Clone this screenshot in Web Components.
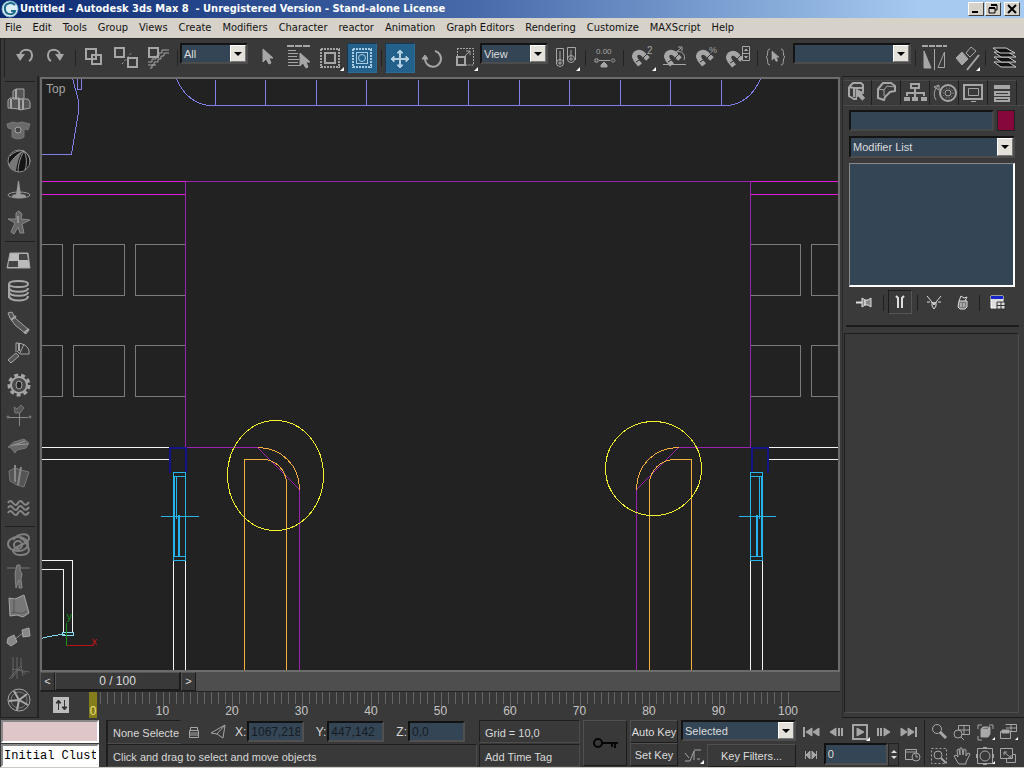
<!DOCTYPE html>
<html lang="en">
<head>
<meta charset="utf-8">
<title>Untitled - Autodesk 3ds Max 8</title>
<style>
html,body{margin:0;background:#393939}
body{font:11px/14px "Liberation Sans",Arial,sans-serif;color:#d8d8d8}
</style>
</head>
<body>
<mx-app></mx-app>
<script>
/* Icon artwork. The stroke is the element's colour; class "f" is filled, class "w" is white. */
const MAGNET='<path d="M14 23 10 18C6 12 12 8 17 12L22 17" stroke-width="5"/><path d="M10 20 15 17M17 16 21 12" stroke="#333"/>';
const CORNER='<path d="M30 25V29H26Z" fill="#fff" stroke="none"/>';
const DOTS='<path d="M7 7H26M7 25H26M7 7V26M25 7V26" stroke-width="2" stroke-dasharray="2 1"/>';
const ARROW='M0 0V13L3 10 6 15 8 14 6 9H10Z';
const ICONS={
undo:'<path d="M12 13C13 6 24 6 24 13 24 16 23 18 21 19" stroke-width="2"/><path class="f" stroke="none" d="M8 12H17L12 19Z"/>',
redo:'<path d="M20 13C19 6 8 6 8 13 8 16 9 18 11 19" stroke-width="2"/><path class="f" stroke="none" d="M15 12H24L20 19Z"/>',
link:'<g stroke-width="2"><rect x="8" y="7" width="10" height="10"/><rect x="14" y="13" width="9" height="9"/></g>',
unlink:'<g stroke-width="2"><rect x="5" y="6" width="9" height="9"/><rect x="18" y="16" width="9" height="9"/></g><path d="M12 22 22 10" stroke-dasharray="2 2"/>',
bind:'<rect x="7" y="6" width="9" height="9" stroke-width="2"/><path d="M6 20H10V17H14V14H17V11H20V8H27M6 23H12V20H16V17H19V14H22V11H27M8 26H10V23H14"/>',
pointer:`<path class="f" transform="translate(13 7)" d="${ARROW}"/>`,
byname:`<path d="M5 4H28" stroke-width="2" stroke-dasharray="7 1"/><path d="M6 8.500H14M6 11.500H16M6 14.500H15M6 17.500H17M6 20.500H16M6 23.500H19"/><path class="f" transform="translate(18 11)" d="${ARROW}"/>`,
rectsel:DOTS+'<rect x="11" y="11" width="10" height="10" stroke-width="2"/>'+CORNER,
windowsel:'<g stroke="#a9cde4">'+DOTS+'<rect x="10.500" y="10.500" width="11" height="11"/><circle cx="16" cy="16" r="3.500"/></g>',
move:'<g stroke="#b4cfdf"><path d="M16 9V25M8 17H24" stroke-width="2"/><path fill="#b4cfdf" d="M13 11 16 8 19 11ZM13 23 16 26 19 23ZM10 14 7 17 10 20ZM22 14 25 17 22 20Z"/></g>',
rotate:'<path d="M19 9A8 8 0 1 1 9 17" stroke-width="2"/><path class="f" d="M6 17 9 13 12 17Z"/>',
scale:'<path d="M9 6.500H25.500V23H18M9.500 6V14" stroke-dasharray="2 1"/><rect x="9" y="15" width="8" height="8" stroke-width="2"/><path d="M17 14 22 9M18 9H22V13"/>'+CORNER,
pivot:'<path d="M6.500 22V6.500H13.500V22M17.500 18V5.500H25.500V18"/><circle cx="10" cy="21" r="3.500"/><circle cx="21" cy="17" r="3.500"/><path d="M10 9V23M8 21H12M21 8V19M19 17H23"/>'+CORNER,
manip:'<path d="M7 17H10V20H7ZM11 18.500H22M23 18.500 25 16.500 27 18.500 25 20.500Z"/><path class="f" d="M16 20 19 23V25H13V23Z"/><text x="8" y="12" font-size="8">0.00</text>',
snap3:MAGNET+'<text x="21" y="12" font-size="10">2</text>'+CORNER,
snapA:MAGNET+'<path d="M5 22.500H28M16 12 23 6M20 5H24V9M18 10C24 8 28 13 26 18"/>',
snapP:MAGNET+'<text x="19" y="11" font-size="9">%</text>',
snapS:'<g transform="translate(-2 1)">'+MAGNET+'</g><path fill="#393939" d="M20.500 4.500H27.500V18.500H20.500Z"/><path d="M20 11.500H28M22.500 8.500 24 7 25.500 8.500ZM22.500 14.500 24 16 25.500 14.500Z"/>',
sets:`<path d="M10 7C6 7 9 14 6 15 9 16 6 23 10 23M21 7C25 7 22 14 25 15 22 16 25 23 21 23" /><path class="f" transform="translate(12 9) scale(.7)" d="${ARROW}"/>`,
mirror:'<path d="M4 4H29" stroke-width="2" stroke-dasharray="6 1"/><path class="f" d="M6 9V26H13Z"/><path d="M16.500 7V28M20 25.500 26.500 10V25.500Z"/>',
align:'<path d="M17 28 29 13" stroke-width="2"/><path class="f" d="M6 16 12 10 18 17 12 23Z"/><path d="M16 11 21 5 26 9 20 15Z"/>'+CORNER,
layers:'<g fill="#111" stroke="#ccc"><path d="M6 20H20L28 25H13Z"/><path d="M6 15H20L28 20H13Z"/><path d="M6 10H20L28 15H13Z"/><path d="M5 6H18L27 11H12Z"/></g>',
boxes:'<g fill="#555"><path d="M11 7 14 5H22V15H11ZM6 16 8 14H17V25L6 24ZM17 17 19 15H26L28 18V24L18 26Z"/></g><path d="M14 5V15M9 15V24M17 14V26M21 16V25" stroke-width="2"/>',
shirt:'<path fill="#6a6a6a" stroke="#777" d="M5 9 11 7 15 8 20 7 28 9 26 15 22 14V22C18 25 13 24 10 22V14L6 13Z"/><circle cx="16" cy="15" r="3" fill="#444"/>',
ball:'<circle cx="17" cy="15" r="11" fill="#151515" stroke="#888"/><path fill="#777" stroke="none" d="M21 5C14 9 9 15 7 21 9 24 11 25 14 25 15 18 17 10 21 5Z"/><path d="M22 5C15 8 9 14 7 20M22 5C18 12 16 19 16 26M8 10C12 6 17 4 22 5 26 8 28 12 28 16M22 5C25 11 25 18 23 24" stroke="#999"/>',
splash:'<path fill="#999" stroke="none" d="M16 4H17L19 18H14Z"/><g stroke="#999"><ellipse cx="17" cy="18" rx="11" ry="3"/><ellipse cx="17" cy="19" rx="6" ry="1" stroke-width="2"/></g>',
doll:'<path fill="#666" stroke="#888" d="M14 5 17 3 20 6 19 11 28 12 20 16 22 25 18 25 16 19 12 26 9 24 13 15 6 11 14 11Z"/><path d="M16 8V15" stroke="#bbb"/>',
plane:'<path fill="#bbb" d="M8 8H26L28 23H5Z"/><path fill="#444" stroke="none" d="M17 9H25L26 15H17ZM7 16H16V22H6Z"/>',
spring:'<path d="M26 8C26 4 7 4 7 8 7 12 26 12 26 8M7 12C8 17 26 17 26 12M7 16C8 21 26 21 26 16M7 20C8 26 26 26 26 20M7 8V22" stroke-width="2"/>',
dashpot:'<path fill="#555" d="M6 6 10 5 13 11 27 23 24 27 13 18 8 11Z"/><path d="M9 13 14 9M22 26 27 22" stroke-width="2"/>',
hinge:'<path fill="#555" d="M6 22 14 15 17 18 9 25Z"/><path d="M14 14V5C23 5 28 10 27 16H18L15 13M18 15 22 6"/><path d="M17 5V13" stroke-width="2"/>',
gear:'<circle cx="17" cy="16" r="10" stroke-width="3" stroke-dasharray="4 3"/><circle cx="17" cy="16" r="8" stroke-width="2" fill="#484848"/><ellipse cx="17" cy="16" rx="3" ry="4" fill="#252525"/>',
vane:'<path fill="#555" stroke="#777" d="M12 7 15 9 19 5 22 8 18 13H13Z"/><g stroke="#888"><path d="M7 17.500H26M17.500 13V26"/><circle cx="6" cy="17" r="1"/><circle cx="28" cy="17" r="1"/></g>',
car:'<path fill="#666" stroke="#777" d="M6 16 12 11 22 8 27 12 24 17 15 19 13 22 9 17Z"/><path d="M9 15 23 10M13 14 26 13" stroke="#999"/>',
fracture:'<path fill="#555" stroke="#777" d="M7 9 13 6 19 8 27 10 22 25 15 23 8 19Z"/><path d="M13 3V20M19 5 16 23" stroke="#888" stroke-width="2"/>',
water:'<path d="M6 10Q8 6 11 10T16 10T21 10T27 9M6 15Q8 11 11 15T16 15T21 15T27 14M6 20Q8 16 11 20T16 20T21 20T27 19" stroke-width="2" stroke="#888"/>',
knot:'<g stroke="#808080" stroke-width="2"><ellipse cx="16" cy="14" rx="10" ry="7"/><path d="M11 10C17 2 28 3 27 9 26 14 12 16 11 21 13 27 27 26 27 20 26 14 22 9 18 8"/><circle cx="16" cy="15" r="4"/></g>',
ragdoll:'<path d="M5 7H28" stroke="#777"/><path fill="#666" stroke="#888" d="M15 4H18V9L20 13 19 18 20 27H17V19L14 27 13 13 14 8Z"/>',
cloth:'<path fill="#777" d="M7 6 13 7 22 3 27 21 21 25 15 23 8 24Z"/><path d="M12 7V20M9 21C14 19 17 24 25 19" stroke="#555"/>',
linked:'<path d="M12 17 21 10" stroke="#888"/><path fill="#888" d="M6 15 12 12 15 19 9 23 5 20ZM20 7 27 5 28 13 21 14Z"/>',
bend:'<path d="M11 3V23M15 3V25M19 4V12L11 20L7 25M10 15 27 18M19 12 21 22M9 25 17 15 24 20" stroke="#666"/>',
wheel:'<circle cx="17" cy="15" r="11"/><circle cx="17" cy="15" r="8" stroke="#777"/><path d="M17 15 12 6M17 15 25 9M17 15 26 20M17 15 15 25M17 15 7 16" stroke="#aaa" stroke-width="2"/>',
create:'<path d="M7 9 11 5H19L21 7V14M7 9V18L12 21H15M7 9 12 10H20M12 11V19" stroke-width="2"/><path class="f" transform="translate(14 11) scale(.8)" d="M0 0V11L3 9 8 14 11 11 7 7 10 5Z"/>',
modify:'<path d="M7 11 12 5H20L24 8V13L19 14 14 19 13 22 7 20Z" stroke-width="2"/><path d="M7 11 13 12 16 8 24 9M13 12V18"/>',
hier:'<path d="M11 6H19V10H11Z" stroke-width="2"/><path d="M15 11V19M7 18V15H24V18" stroke-width="2"/><path class="f" d="M4 19H10V23H4ZM12 19H18V23H12ZM21 19H27V23H21Z" stroke="none"/>',
motion:'<circle cx="19" cy="15" r="8" stroke-width="2"/><circle cx="19" cy="15" r="3"/><circle cx="19" cy="15" r="5" stroke-dasharray="1 2"/><path d="M7 22C4 17 5 12 9 8M5 9 10 7V12Z"/>',
display:'<path d="M6 7H24V21H6Z" stroke-width="2"/><path d="M10.500 10.500H20.500V17.500H10.500ZM13 23.500H18"/>',
utils:'<path class="f" d="M7 7H23V11H7Z" stroke="none"/><path d="M8 14H22V17H8ZM8 20H22V23H8Z" stroke-width="2"/>',
pin:'<g stroke="#ddd"><path d="M2 12.500H9" stroke-width="2"/><path fill="#888" d="M8 8 11 10V15L8 17ZM11 10H14L17 8V17L14 15H11Z"/></g>',
showend:'<path d="M8 6 10 8V18M16 6 14 8V18" stroke="#ddd" stroke-width="2"/>',
unique:'<g stroke="#ddd"><path d="M5 6 10 12V16L12 19 14 16V12L19 6M5 12 8 12M16 12H19"/><path d="M10 12 12 15 14 12" fill="#bbb"/></g>',
trash:'<g stroke="#ddd"><path d="M8 11H16V17L14 19H9L7 17Z" fill="#777"/><path d="M8 11 10 6 13 8 16 7 14 11M10 13V17M13 13V17"/></g>',
config:'<path fill="#ddd" stroke="#fff" d="M6 6H18V18H6Z"/><path fill="#1426c8" stroke="none" d="M6 6H18V9H6Z"/><path fill="#ddd" stroke="#333" d="M12 12H20V19H12ZM12 15.500H20M16 12V19"/>',
lock:'<path d="M8.500 10V7.500H15.500V10M7.500 10.500H16.500V17.500H7.500ZM7 13H17M7 15H17"/>',
abs:'<path d="M5 13 19 5 17 18 11 14ZM11 14 19 5"/>',
key:'<g stroke="#050505" stroke-width="2"><circle cx="9" cy="16" r="4"/><path d="M13 16H29M26 16V21M23 16V20"/></g>',
curve:'<path d="M4 17H9L13 7V16M13 6H20M4 9 8 14M16 15H19" /><path d="M23 16V20H19Z" fill="#fff" stroke="none"/>',
first:'<path d="M5 7V17" stroke-width="2"/><path class="f" d="M13 8V16L7 12ZM20 8V16L14 12Z"/>',
last:'<path d="M19 7V17" stroke-width="2"/><path class="f" d="M4 8V16L10 12ZM11 8V16L17 12Z"/>',
prev:'<path class="f" d="M12 8V16L6 12Z"/><path d="M15 8V16M18 8V16" stroke-width="2"/>',
next:'<path class="f" d="M12 8V16L18 12Z"/><path d="M6 8V16M9 8V16" stroke-width="2"/>',
play:'<path d="M5 5H19V19H5Z" stroke-width="2"/><path class="f" d="M9 8V16L16 12Z"/><path d="M22 17V21H18Z" fill="#fff" stroke="none"/>',
keymode:'<path class="f" d="M11 8V16L7 12ZM13 8V16L17 12Z"/><path d="M6.500 8V16M17.500 8V16"/>',
time:'<path d="M5.500 6.500H16.500V16.500H5.500ZM5 9H17" /><circle cx="16" cy="14" r="4" fill="#393939"/><path d="M16 11V14H18"/>',
zoom:'<circle cx="10" cy="9" r="4.500"/><path d="M13 12 19 18" stroke-width="3"/>',
zoomall:'<path d="M8.500 5.500H19.500V14.500H8.500ZM14 5V15M8 10H20"/><circle cx="8" cy="14" r="4" fill="#393939"/><path d="M11 17 14 20"/>',
extents:'<path d="M5 9V5H9M16 5H20V9M5 16V20H9" /><path fill="#aaa" d="M8 9H15V17H8ZM15 9 17 7V14L15 17M8 9 10 7H17" /><path d="M23 16V20H19Z" fill="#fff" stroke="none"/>',
extall:'<path d="M9.500 4.500H20.500V11.500H9.500M15 4V11M10 8H20M4.500 11.500H14.500V18.500H4.500Z"/><path fill="#aaa" d="M6 10H13V13H6Z"/><path d="M23 16V20H19Z" fill="#fff" stroke="none"/>',
region:'<path d="M4.500 4.500H19.500V19.500H4.500Z" stroke-dasharray="2 2"/><circle cx="11" cy="11" r="4"/><path d="M14 14 19 19" stroke-width="2"/>',
pan:'<path d="M8 19 4 12 6 11 8 13 7 6 9 5 10 11V4H12L13 11 14 5 16 6V12L18 9 20 10 16 18V20H9Z"/>',
arc:'<path d="M4.500 4.500H19.500V19.500H4.500Z"/><circle cx="12" cy="12" r="5"/><path d="M10 4H14M10 20H14M4 10V14M20 10V14" stroke-width="2"/><path d="M23 16V20H19Z" fill="#fff" stroke="none"/>',
minmax:'<path d="M4.500 4.500H16.500V14.500H4.500ZM10.500 14V18.500H19.500V10.500H16M8 8 15 14M8 11V8H11M15 11V14H12"/>',
curves:'<path d="M4 4H20V20H4Z" fill="#bdbdbd" stroke="none"/><g stroke="#333"><path d="M9.500 7V17M15.500 7V17"/><path fill="#333" d="M7 10 9.500 7 12 10ZM13 14 15.500 17 18 14Z"/></g>',
logo:'<circle cx="9" cy="9" r="8" fill="#dfeef5" stroke="#7fb6cc"/><path d="M14 5C10 1 3 4 4 9 4 15 13 16 14 11H10" stroke="#1d6c8d" stroke-width="2"/>'
};

/* Shared base: every element renders its own markup and styles into an open root. */
class MxElement extends HTMLElement{
  connectedCallback(){
    if(this.shadowRoot)return;
    const t=document.createElement('template');
    t.innerHTML='<style>*{box-sizing:border-box}'+this.css()+'</style>'+this.html();
    this.attachShadow({mode:'open'}).append(t.content.cloneNode(true));
  }
  css(){return ':host{display:block}'}
  html(){return '<slot></slot>'}
}

customElements.define('mx-icon',class extends MxElement{
  css(){return `:host{display:block;flex:none;color:#a6a6a6}svg{display:block}.f{fill:currentColor}
    text{fill:currentColor;stroke:none;font-family:"Liberation Sans",sans-serif}`}
  html(){const s=+this.getAttribute('size')||32;
    return `<svg width="${s}" height="${s}" viewBox="0 0 ${s} ${s}" fill="none" stroke="currentColor" aria-hidden="true">${ICONS[this.getAttribute('name')]}</svg>`}
});

customElements.define('mx-tool',class extends MxElement{
  css(){return `:host{display:block;flex:none}
    button{display:flex;align-items:center;justify-content:center;width:100%;height:100%;padding:0;border:1px solid transparent;background:none;overflow:hidden}
    :host([active]) button{background:#23608a;border-color:#1b3850 #2d6c94 #2d6c94 #1b3850}
    :host([pressed]) button{border-color:#1c1c1c #555 #555 #1c1c1c}`}
  html(){return `<button type="button" aria-label="${this.getAttribute('icon')}"><mx-icon name="${this.getAttribute('icon')}" size="${this.getAttribute('size')||32}"></mx-icon></button>`}
});

customElements.define('mx-drop',class extends MxElement{
  css(){return `:host{display:grid;flex:none;height:21px;border:2px solid;border-color:#141414 #4c4c4c #4c4c4c #141414;background:#344555}
    select,i{grid-area:1/1}
    select{appearance:none;min-width:0;width:100%;padding:0 18px 0 2px;border:0;background:none;color:#ddd;font:inherit;outline:0}
    i{justify-self:end;width:16px;background:#e4e0da;border:1px solid;border-color:#fff #777 #777 #fff;pointer-events:none;display:grid;place-items:center}
    i::after{content:"";border:4px solid transparent;border-top-color:#000;border-bottom:0}`}
  html(){const v=this.getAttribute('value')||'';
    return `<select aria-label="${this.getAttribute('label')}"><option>${v}</option></select><i></i>`}
});

customElements.define('mx-titlebar',class extends MxElement{
  css(){return `:host{display:flex;align-items:center;height:18px;padding:0 4px 0 1px;gap:1px;background:linear-gradient(90deg,#0c2a72,#4468a8 45%,#a6caf0 90%);color:#fff;font:bold 11px/18px "DejaVu Sans Condensed","DejaVu Sans",sans-serif}
    h1{flex:1;margin:0;font:inherit;white-space:pre}
    button{width:16px;height:14px;padding:0;background:#d6d2ca;border:1px solid;border-color:#fff #404040 #404040 #fff;display:grid;place-items:center}
    button:last-child{margin-left:2px}svg{display:block}`}
  html(){const b=(l,p)=>`<button type="button" aria-label="${l}"><svg width="12" height="12" viewBox="0 0 12 12" fill="none" stroke="#000">${p}</svg></button>`;
    return `<mx-icon name="logo" size="18"></mx-icon><h1>Untitled - Autodesk 3ds Max 8  - Unregistered Version - Stand-alone License</h1>`
    +b('Minimize','<path d="M2 9H8" stroke-width="2"/>')+b('Restore','<path d="M4 2H10V7H8M2 5H8V10H2Z"/><path d="M4 2H10M2 5H8" stroke-width="2"/>')+b('Close','<path d="M2 2 10 10M10 2 2 10" stroke-width="2"/>')}
});

customElements.define('mx-menubar',class extends MxElement{
  css(){return `:host{display:block;background:#d6d1c9;color:#111;font:11px/20px "DejaVu Sans Condensed","DejaVu Sans",sans-serif}
    nav{display:flex;gap:11px;height:20px;padding-left:5px}a{color:inherit;text-decoration:none;white-space:nowrap}`}
  html(){return '<nav>'+['File','Edit','Tools','Group','Views','Create','Modifiers','Character','reactor','Animation','Graph Editors','Rendering','Customize','MAXScript','Help'].map(m=>`<a href="#">${m}</a>`).join('')+'</nav>'}
});

customElements.define('mx-toolbar',class extends MxElement{
  css(){return `:host{display:flex;height:38px;padding:4px 0 3px;background:#393939;border-top:1px solid #2a2a2a}
    mx-tool{width:32px;height:30px}
    mx-tool[active]{width:30px;margin:0 1px}
    .grip{width:8px;border-left:1px solid #222;margin:-4px 0;box-shadow:inset 3px 0 #393939,inset 4px 0 #222}
    .sep{width:6px;flex:none;background:linear-gradient(#222,#222) 3px 7px/1px 16px no-repeat}
    mx-drop{width:68px;margin-right:2px}.wide{width:118px;margin:0 1px}`}
  html(){const t=s=>s.split(' ').map(n=>n==='|'?'<div class="sep"></div>':`<mx-tool icon="${n}"${n==='windowsel'||n==='move'?' active':''}></mx-tool>`).join('');
    return '<div class="grip"></div>'+t('undo redo | link unlink bind |')+'<mx-drop label="Selection filter" value="All"></mx-drop>'
    +t('pointer byname rectsel windowsel | move rotate scale')+'<mx-drop label="Coordinate system" value="View"></mx-drop>'
    +t('pivot | manip | snap3 snapA snapP snapS | sets')+'<mx-drop class="wide" label="Named selection sets"></mx-drop>'+t('| mirror align | layers')}
});

customElements.define('mx-sidebar',class extends MxElement{
  css(){return `:host{display:flex;flex-direction:column;width:39px;flex:none;padding:5px 0 0;border-right:2px solid #242424;border-left:1px solid #222;border-bottom:1px solid #222}
    mx-tool{width:34px;height:31px}hr{margin:0 2px 2px 4px;border:0;border-top:1px solid #1e1e1e;flex:none}.s{margin:2px 2px 3px 4px}`}
  html(){const t=s=>s.split(' ').map(n=>`<mx-tool icon="${n}"></mx-tool>`).join('');
    return '<hr>'+t('boxes shirt ball splash doll')+'<hr class="s">'+t('plane spring dashpot hinge gear vane car fracture water')+'<hr class="s">'+t('knot ragdoll cloth linked bend wheel')}
});

customElements.define('mx-viewport',class extends MxElement{
  css(){return `:host{display:grid;border:2px solid #6c6c6c;background:#222;overflow:hidden}
    svg,span{grid-area:1/1;min-width:0;min-height:0}svg{display:block;width:100%;height:100%}
    span{padding:3px 4px;color:#a2a2a2;font-size:12px;align-self:start;justify-self:start}
    text{font:11px "Liberation Sans",sans-serif}`}
  html(){
    const ticks=[215,265,316,366,418,468,519,569,620,670,721].map(x=>`M${x} 79V105`).join('');
    return `<svg viewBox="42 79 796 591" preserveAspectRatio="xMidYMid slice" fill="none" shape-rendering="crispEdges" role="img" aria-label="Top view"><g transform="translate(.5 .5)">
    <path stroke="#8080ea" d="M72 78 78 100 78 112 71 154H41M77 78V89H81V78M176 78C182 93 194 105 212 105H724C742 105 754 93 760 78${ticks}"/>
    <path stroke="#7b7b7b" d="M41 244H62V295H41M73 244H124V295H73ZM185 244H135V295H185M41 345H62V396H41M73 345H124V396H73ZM185 345H135V396H185M750 244H800V295H750M839 244H811V295H839M750 345H800V396H750M839 345H811V396H839"/>
    <path stroke="#e01ce0" d="M41 181H185M41 194H185M750 181H839M750 194H839"/>
    <path stroke="#9a22ae" d="M185 181V447M750 181V447M185 181H750M185 447H257L299 489V671M750 447H678L636 489V671"/>
    <path stroke="#f4f4f4" d="M41 447H168M41 459H168M768 447H839M768 459H839M173 560V671M185 560V671M750 560V671M762 560V671M41 560H72V632M41 569H63V632"/>
    <path stroke="#131388" stroke-width="2" d="M169 472V447H185V472M751 472V447H767V472"/>
    <path stroke="#25b4ec" d="M173 472H185V560H173ZM173 476H185M173 556H185M174 476V556M176 476V518M178 514V556M179 514V556M160 516H198M750 472H762V560H750ZM750 476H762M750 556H762M761 476V556M759 476V518M757 514V556M756 514V556M738 516H775"/>
    <path stroke="#f5b040" d="M244 671V459H262C276 459 286 470 286 484V671M257 447C281 447 299 465 299 489M691 671V459H675C660 459 649 470 649 484V671M678 447C654 447 636 465 636 489"/>
    <g stroke="#f2f22e"><ellipse cx="275" cy="475" rx="48" ry="55"/><ellipse cx="653" cy="468" rx="48" ry="47"/></g>
    <path stroke="#86dcf0" d="M62 632H73V635H62ZM64 634C56 634 48 636 41 638"/>
    <path stroke="#169016" d="M66 645V622"/><path stroke="#b01414" d="M66 645H93"/>
    <text x="66" y="619" fill="#169016">y</text><text x="91" y="644" fill="#c81414">x</text></g></svg><span>Top</span>`}
});

customElements.define('mx-track',class extends MxElement{
  css(){return `:host{display:block}
    .slide{display:flex;height:19px;background:#4e4e4e;margin-right:2px}
    button{font:inherit;line-height:15px;color:#ddd;background:#393939;border:1px solid;border-color:#555 #1c1c1c #1c1c1c #555;padding:0;width:15px}
    .thumb{width:126px;border-width:1px 2px 2px 1px;font-size:12px}
    .ruler{display:flex;height:27px;border-top:1px solid #222;margin-right:2px}
    .head{width:53px;display:grid;place-items:center;padding-right:12px}
    .scale{flex:1;display:grid;margin-right:52px;min-width:0}
    .ticks,.nums{grid-area:1/1;display:flex}
    .ticks i{flex:1;height:12px;border-left:1px solid #646464}.ticks i:nth-child(10n+1){height:21px}
    .nums{margin:0 -5%;color:#c4c4c4;font-size:12px;align-items:stretch}
    .nums span{flex:1;min-width:0;text-align:center;padding-top:12px}
    .nums span:first-child{background:linear-gradient(#857d1c,#857d1c) center/8px 100% no-repeat;color:#eee27a}
    .nums span:last-child{background:linear-gradient(#646464,#646464) center top/1px 12px no-repeat}`}
  html(){return `<div class="slide"><button type="button">&lt;</button><button type="button" class="thumb">0 / 100</button><button type="button">&gt;</button></div>
    <div class="ruler"><div class="head"><mx-icon name="curves" size="24"></mx-icon></div><div class="scale"><div class="ticks">${'<i></i>'.repeat(100)}</div>
    <div class="nums">${[0,10,20,30,40,50,60,70,80,90,100].map(n=>`<span>${n}</span>`).join('')}</div></div></div>`}
});

customElements.define('mx-panel',class extends MxElement{
  css(){return `:host{display:flex;flex-direction:column;flex:none;width:182px;border-top:1px solid #222;border-left:1px solid #2a2a2a;border-bottom:1px solid #1c1c1c;background:#3a3a3a}
    .tabs{display:flex;padding:3px 7px 0 0;border-bottom:1px solid #4a4a4a}.tabs mx-tool{flex:1;min-width:0;height:25px;border-right:1px solid #1f1f1f;border-top:1px solid #484848}
    .body{padding:4px 9px 0 6px;display:grid;grid-template-columns:minmax(0,1fr);gap:5px}
    .name{display:flex;gap:3px}input{flex:1;min-width:0;height:21px;border:2px solid;border-color:#141414 #484848 #484848 #141414;background:#344555;color:#ddd;font:inherit;padding:0 2px}
    .name button{width:18px;border:1px solid #222;background:#86073a;padding:0}
    .mods{height:22px}
    .list{height:124px;background:#344555;border:1px solid #888;border-right:2px solid #fff;border-bottom:2px solid #fff}
    .tools{display:flex;justify-content:space-between;padding:3px 15px 0 11px;height:28px}.tools mx-tool{width:24px;height:24px}.tools i{width:1px;margin:5px 0 4px;background:#1f1f1f}
    .cut{border-top:2px solid #1c1c1c;margin:10px 5px 6px 3px}
    .roll{flex:1;margin:0 5px 4px 1px;border:1px solid;border-color:#1e1e1e #4e4e4e #4e4e4e #1e1e1e}`}
  html(){const t=(n,s)=>n.split(' ').map(x=>x==='|'?'<i></i>':`<mx-tool icon="${x}" size="${s}"${x==='showend'?' pressed':''}></mx-tool>`).join('');
    return `<div class="tabs">${t('create modify hier motion display utils',30)}</div><div class="body"><div class="name"><input aria-label="Object name"><button type="button" aria-label="Object color"></button></div>
    <mx-drop class="mods" label="Modifier List" value="Modifier List"></mx-drop><div class="list"></div></div>
    <div class="tools">${t('pin | showend | unique trash | config',24)}</div><div class="cut"></div><div class="roll"></div>`}
});

customElements.define('mx-status',class extends MxElement{
  css(){return `:host{display:flex;height:50px;padding:2px 0 1px;gap:3px;border-bottom:1px solid #c8c8c0}
    input{font:inherit;min-width:0;height:21px;padding:0 2px;color:#151c22;background:#344555;border:2px solid;border-color:#121212 #505050 #505050 #121212;border-radius:0}
    .script{width:99px;flex:none;display:grid;gap:1px;padding-left:1px}
    .script input{width:100%;height:23px;background:#fff;color:#000;border-color:#888 #fff #fff #888;font:12px "Liberation Mono",monospace;padding:0 1px}
    .script input:first-child{background:#dfc6c8}
    .info{flex:1;min-width:0;margin-left:4px;display:grid;grid-template:23px 23px/minmax(0,1fr) 101px;gap:1px 2px;border-left:1px solid #1c1c1c}
    .cell{border:1px solid;border-color:#1e1e1e #4c4c4c #4c4c4c #1e1e1e;padding:4px 5px 2px;line-height:16px;white-space:nowrap}
    .xyz{display:flex;align-items:center;min-width:0}.sel{width:74px;flex:none;margin-right:1px;border-right-color:transparent}
    label{display:flex;align-items:center;font-size:12px;margin-right:12px;flex:1;min-width:0;gap:1px}label:first-of-type{margin-left:5px}label input{flex:1;width:0}
    .btn{font:inherit;color:#ddd;background:none;border:1px solid;border-color:#505050 #1c1c1c #1c1c1c #505050;padding:0;white-space:nowrap}
    .big{width:44px;display:grid;place-items:center}
    .keys{width:48px;display:grid}.filters{width:115px;display:grid;grid-template:23px 23px/26px 1fr;gap:1px 0}.filters mx-drop{grid-column:1/3}
    mx-tool{width:24px;height:23px}
    .play,.row{display:flex}.play{flex-direction:column;justify-content:space-between;width:126px;border-right:1px solid #1e1e1e}
    .row{justify-content:space-between}.row.a{padding-right:3px}.row.a mx-tool{flex:1 1 0;min-width:0}
    .frame{width:64px;color:#ddd;height:22px}
    .spin{width:11px;display:grid;align-content:center;justify-items:center;gap:3px;border:1px solid #222}
    .spin::before,.spin::after{content:"";border:3px solid transparent}.spin::before{border-bottom-color:#ddd;border-top:0}.spin::after{border-top-color:#ddd;border-bottom:0}
    .nav{width:92px;display:grid;grid-template:23px 23px/repeat(4,minmax(0,1fr));gap:1px 0;margin:0 5px 0 -1px}.nav mx-tool{width:auto}`}
  html(){const t=s=>s.split(' ').map(n=>`<mx-tool icon="${n}" size="24"></mx-tool>`).join('');
    const c=(l,v)=>`<label>${l}:<input value="${v}"></label>`;
    return `<div class="script"><input aria-label="Macro recorder"><input aria-label="Listener" value="Initial Clust"></div>
    <div class="info"><div class="xyz"><div class="cell sel">None Selecte</div>${t('lock abs')}${c('X','1067,218')}${c('Y','447,142')}${c('Z','0,0')}</div><div class="cell">Grid = 10,0</div>
    <div class="cell">Click and drag to select and move objects</div><div class="cell">Add Time Tag</div></div>
    <button type="button" class="btn big" aria-label="Set keys"><mx-icon name="key"></mx-icon></button>
    <div class="keys"><button type="button" class="btn">Auto Key</button><button type="button" class="btn">Set Key</button></div>
    <div class="filters"><mx-drop label="Key set" value="Selected"></mx-drop><mx-tool icon="curve" size="24"></mx-tool><button type="button" class="btn">Key Filters...</button></div>
    <div class="play"><div class="row a">${t('first prev play next last')}</div><div class="row">${t('keymode')}<input class="frame" aria-label="Frame" value="0"><div class="spin"></div>${t('time')}</div></div>
    <div class="nav">${t('zoom zoomall extents extall region pan arc minmax')}</div>`}
});

customElements.define('mx-app',class extends MxElement{
  css(){return `:host{display:flex;flex-direction:column;min-height:100vh;background:#393939}
    main{flex:1;display:flex;min-height:0}.center{flex:1;min-width:0;display:flex;flex-direction:column;padding:1px 0 0 1px}
    mx-viewport{flex:1 1 0;min-height:0;margin-right:2px}`}
  html(){return `<mx-titlebar></mx-titlebar><mx-menubar></mx-menubar><mx-toolbar></mx-toolbar>
    <main><mx-sidebar></mx-sidebar><div class="center"><mx-viewport></mx-viewport><mx-track></mx-track></div><mx-panel></mx-panel></main><mx-status></mx-status>`}
});
</script>
</body>
</html>
